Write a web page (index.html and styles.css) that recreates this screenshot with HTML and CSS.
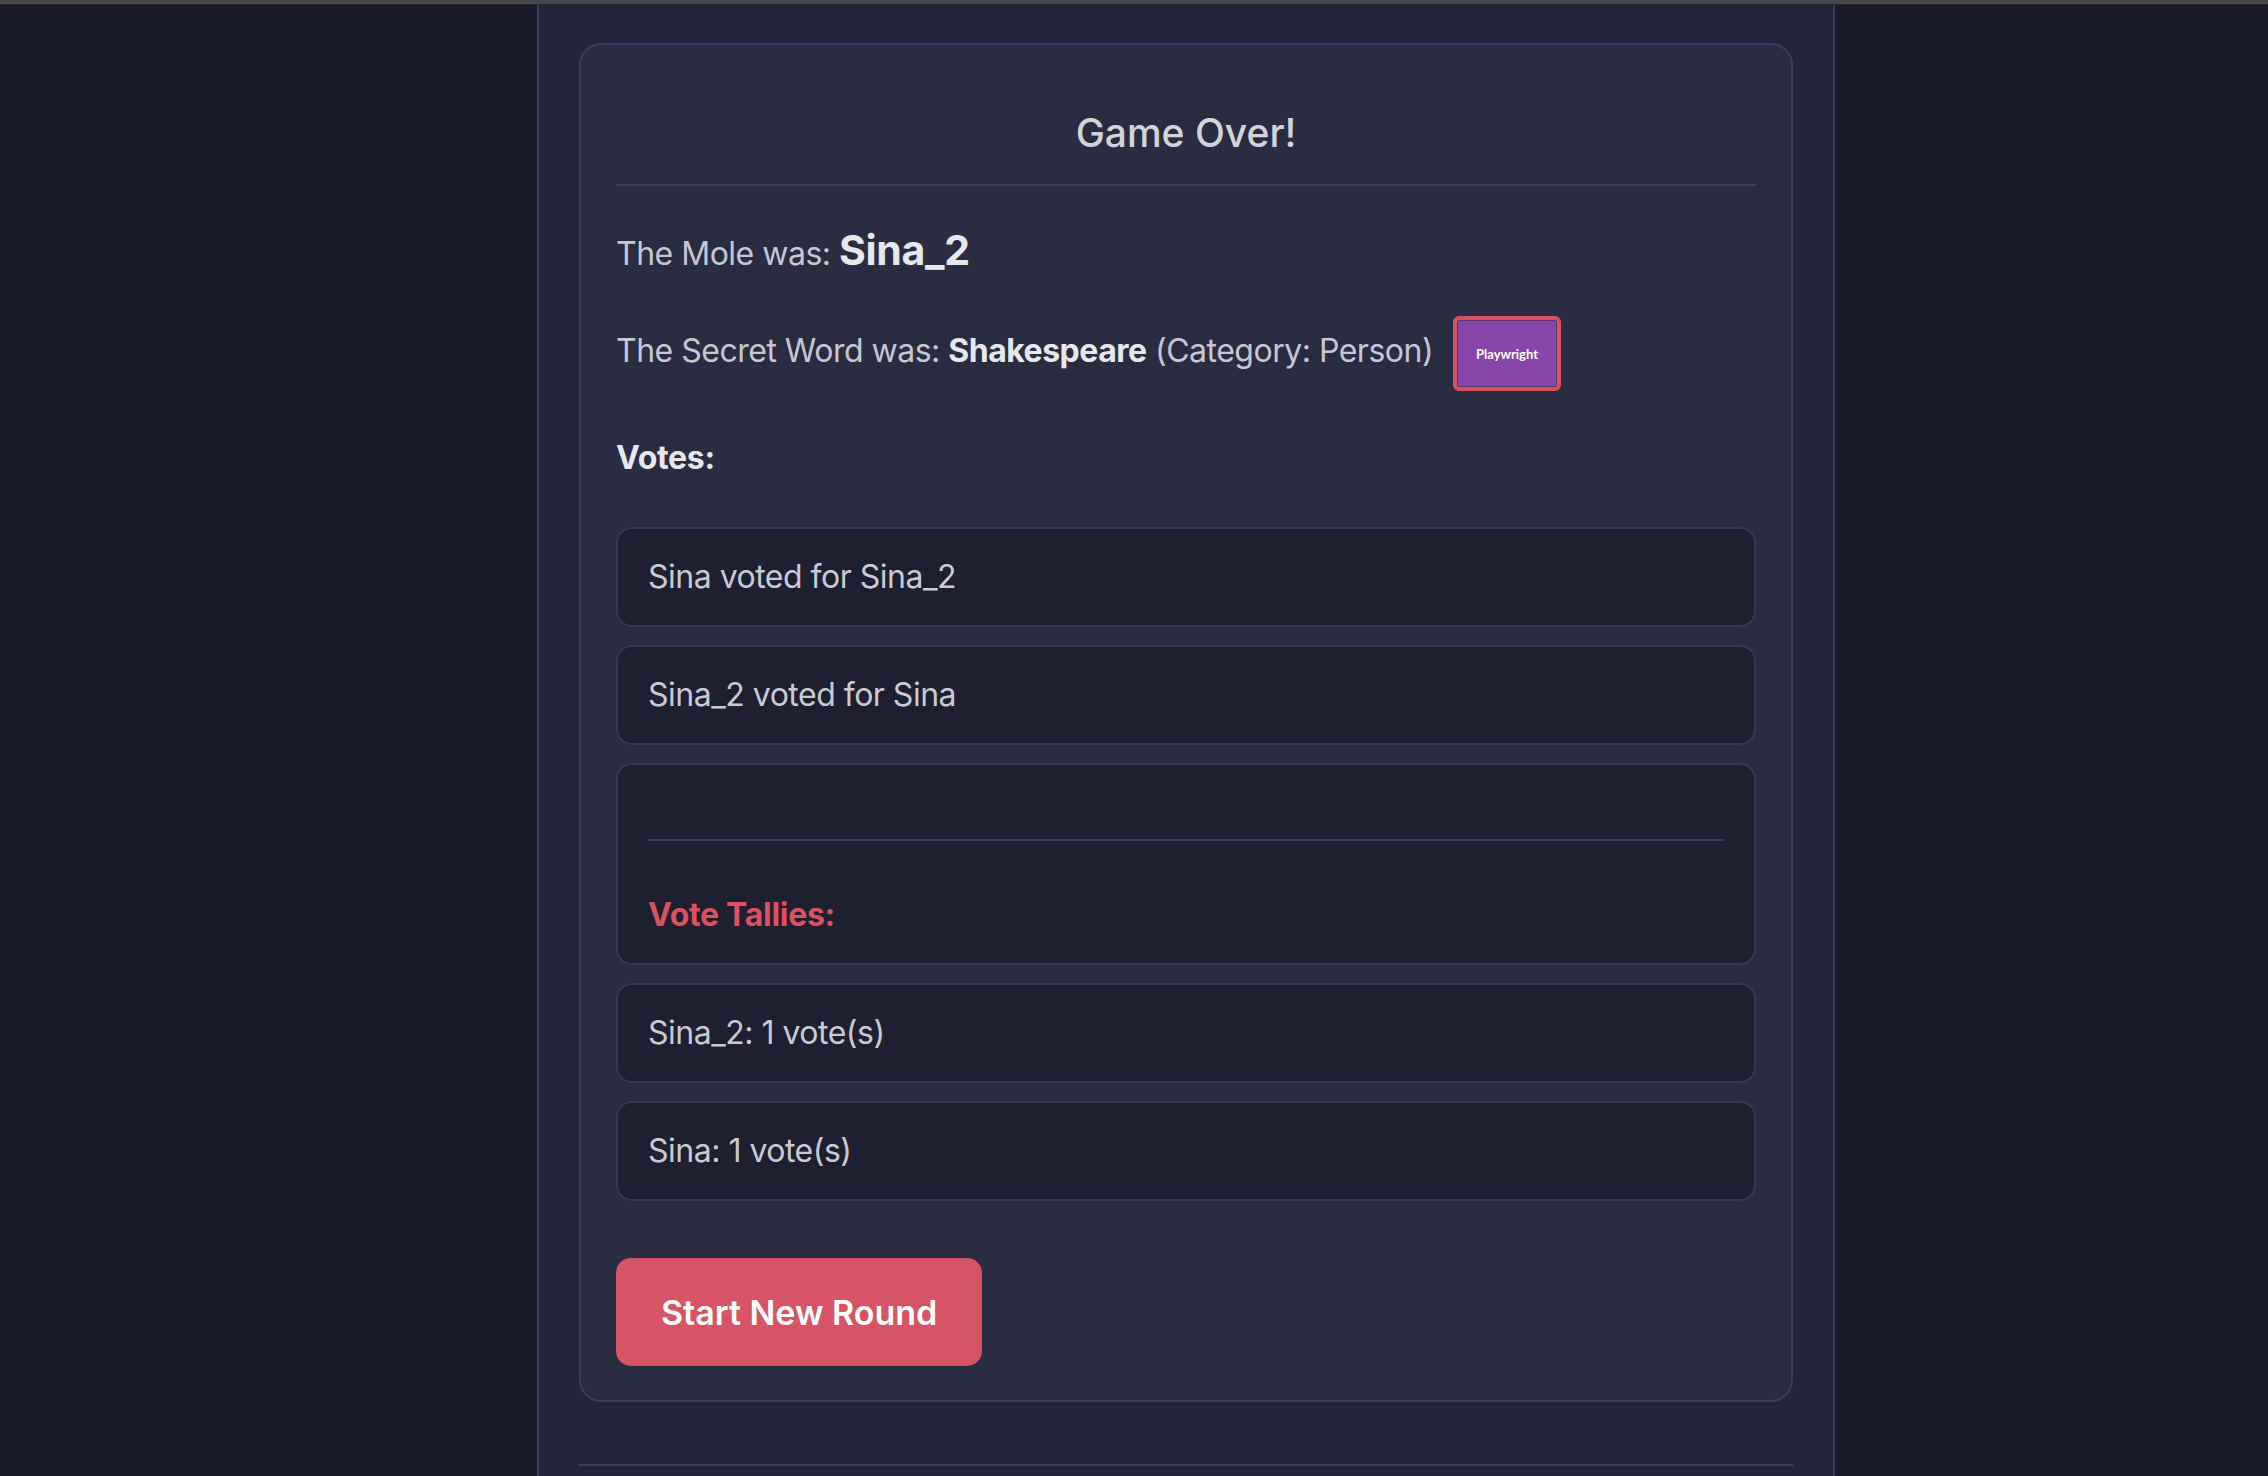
FILE: index.html
```html
<!DOCTYPE html>
<html lang="en">
<head>
<meta charset="utf-8">
<title>Game Over</title>
<link rel="stylesheet" href="styles.css">
</head>
<body>
<div class="topbar"></div>
<main class="column">
  <section class="card">
    <h2 class="title">Game Over!</h2>
    <hr class="rule">
    <p class="mole">The Mole was: <strong class="mole-name">Sina_2</strong></p>
    <div class="secret">
      <p class="secret-text">The Secret Word was: <strong>Shakespeare</strong> (Category: Person)</p>
      <div class="badge">Playwright</div>
    </div>
    <h4 class="votes-title">Votes:</h4>
    <ul class="vote-list">
      <li class="vote-item">Sina voted for Sina_2</li>
      <li class="vote-item">Sina_2 voted for Sina</li>
      <li class="vote-item tally-head">
        <hr class="inner-rule">
        <span class="tally-title">Vote Tallies:</span>
      </li>
      <li class="vote-item">Sina_2: 1 vote(s)</li>
      <li class="vote-item">Sina: 1 vote(s)</li>
    </ul>
    <button class="new-round">Start New Round</button>
  </section>
  <div class="bottom-rule"></div>
</main>
</body>
</html>
```
FILE: styles.css
```css
html, body {
  margin: 0;
  padding: 0;
}
body {
  background: #1a1b2b;
  font-family: Inter, "Noto Sans", sans-serif;
  color: #c6c7d0;
  min-height: 1476px;
}
.topbar {
  height: 4px;
  background: #47474b;
  border-bottom: 1px solid #2b2b30;
}
.column {
  box-sizing: border-box;
  margin-left: 537px;
  width: 1298px;
  min-height: 1471px;
  background: #23263a;
  border-left: 2px solid #3a3c5e;
  border-right: 2px solid #3a3c5e;
  padding: 38px 40px 0;
}
.card {
  box-sizing: border-box;
  width: 1214px;
  background: #2a2c42;
  border: 2px solid #3b3d60;
  border-radius: 22px;
  padding: 35px 35px 34px;
}
.title {
  margin: 29px 0 27px;
  font-size: 39px;
  line-height: 48px;
  font-weight: 500;
  text-align: center;
  color: #d3d4da;
}
.rule {
  margin: 0;
  border: 0;
  border-top: 2px solid #3d3f5f;
  height: 0;
}
.mole {
  margin: 40px 0 0;
  font-size: 32px;
  line-height: 38px;
  letter-spacing: -0.5px;
}
.mole-name {
  font-size: 41px;
  line-height: 49px;
  font-weight: 700;
  letter-spacing: -0.3px;
  color: #e7e8ed;
}
.secret {
  margin-top: 41px;
  display: flex;
  align-items: center;
  gap: 20px;
}
.secret-text {
  margin: 0 0 6px;
  font-size: 32px;
  line-height: 38px;
  letter-spacing: -0.5px;
}
.secret-text strong {
  color: #e7e8ed;
  font-weight: 700;
}
.badge {
  box-sizing: border-box;
  width: 108px;
  height: 75px;
  border: 4px solid #d9505f;
  border-radius: 6px;
  background: #8746a9;
  box-shadow: inset 0 0 0 1px #5a3a6a;
  display: flex;
  align-items: center;
  justify-content: center;
  color: #ffffff;
  font-family: Lato, "Noto Sans", sans-serif;
  font-weight: 700;
  font-size: 13px;
}
.votes-title {
  margin: 48px 0 0;
  font-size: 32px;
  line-height: 38px;
  font-weight: 700;
  letter-spacing: -0.3px;
  color: #e7e8ed;
}
.vote-list {
  list-style: none;
  margin: 50px 0 0;
  padding: 0;
  display: flex;
  flex-direction: column;
  gap: 18px;
}
.vote-item {
  background: #1e1f31;
  border: 2px solid #35375a;
  border-radius: 16px;
  padding: 29px 30px;
  font-size: 32px;
  line-height: 38px;
  letter-spacing: -0.5px;
  color: #c9cad2;
}
.tally-head {
  display: flex;
  flex-direction: column;
}
.inner-rule {
  margin: 45px 0 55px;
  border: 0;
  border-top: 2px solid #3a3c58;
  height: 0;
  width: 100%;
}
.tally-title {
  font-weight: 700;
  letter-spacing: -0.3px;
  color: #dc5062;
}
.new-round {
  margin-top: 57px;
  height: 108px;
  padding: 0 45px;
  border: 0;
  border-radius: 15px;
  background: #d75466;
  color: #ffffff;
  font-family: Inter, "Noto Sans", sans-serif;
  font-size: 34px;
  font-weight: 600;
  cursor: pointer;
}
.bottom-rule {
  margin-top: 62px;
  width: 1214px;
  height: 2px;
  background: #3c3e5e;
}
```
